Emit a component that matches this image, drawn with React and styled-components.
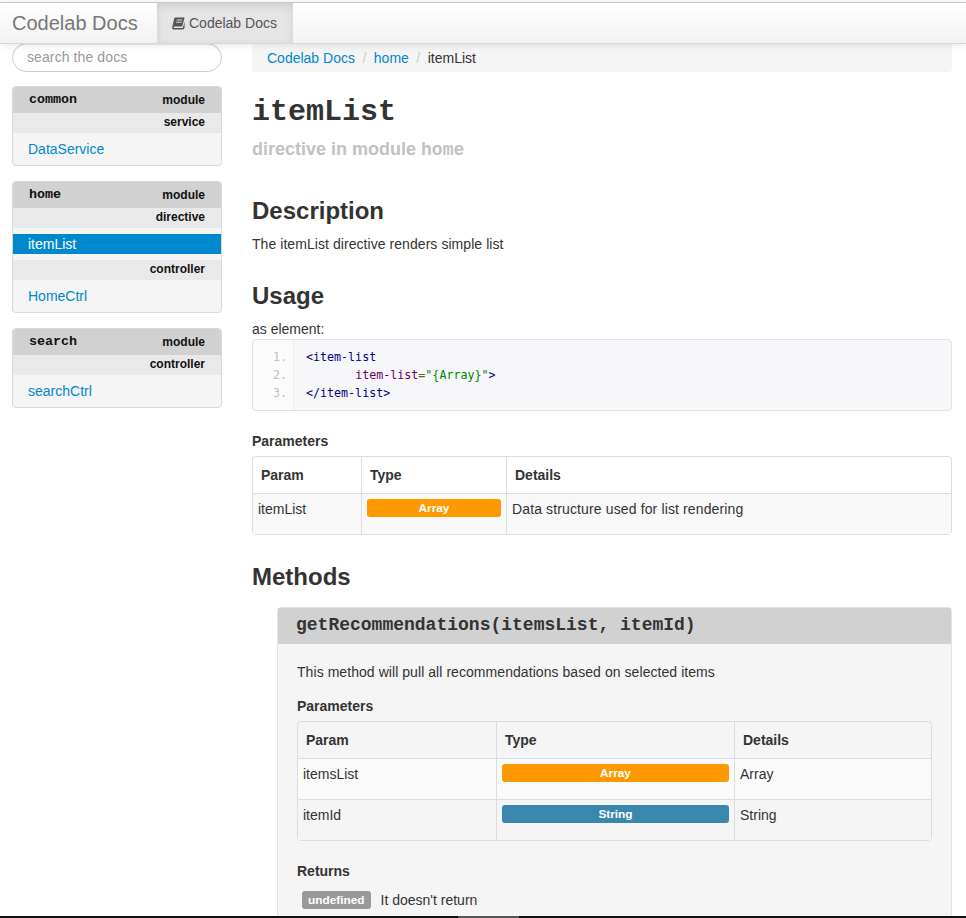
import React from 'react';
import styled, { createGlobalStyle } from 'styled-components';

const Global = createGlobalStyle`
  html, body { margin: 0; padding: 0; background: #fff; }
  body {
    font-family: "Liberation Sans", Arial, sans-serif;
    font-size: 14px;
    line-height: 20px;
    color: #333;
  }
  * { box-sizing: border-box; }
`;

const Page = styled.div`
  position: relative;
  width: 966px;
  height: 918px;
  overflow: hidden;
  padding-top: 2px;
`;

const BottomEdge = styled.div`
  position: absolute;
  left: 0;
  right: 0;
  bottom: 0;
  height: 2px;
  background: linear-gradient(to right, #111 458px, #555 458px, #555 519px, #111 519px);
`;

const Navbar = styled.div`
  display: flex;
  height: 42px;
  border-top: 1px solid #c9c9c9;
  border-bottom: 1px solid #d8d8d8;
  background: linear-gradient(to bottom, #fff, #f2f2f2);
  box-shadow: 0 1px 8px rgba(0, 0, 0, 0.1);
  position: relative;
  z-index: 2;
`;

const Brand = styled.div`
  font-size: 20px;
  line-height: 40px;
  color: #777;
  padding-left: 12px;
  width: 157px;
`;

const NavTab = styled.div`
  display: flex;
  align-items: center;
  gap: 4px;
  width: 136px;
  padding-left: 15px;
  font-size: 14px;
  color: #555;
  background: #e5e5e5;
  box-shadow: inset 0 3px 8px rgba(0, 0, 0, 0.1);
`;

const Columns = styled.div`
  display: flex;
  padding-left: 12px;
`;

const Sidebar = styled.div`
  width: 210px;
  flex: none;
  display: flex;
  flex-direction: column;
  gap: 15px;
`;

const Search = styled.input`
  width: 210px;
  height: 29px;
  margin-top: -1px;
  margin-bottom: -1px;
  padding: 0 14px 2px;
  border: 1px solid #ccc;
  border-radius: 15px;
  font: 14px "Liberation Sans", Arial, sans-serif;
  letter-spacing: 0.1px;
  outline: none;
  box-shadow: inset 0 1px 1px rgba(0, 0, 0, 0.075);
  &::placeholder { color: #999; opacity: 1; }
`;

const ModuleCard = styled.div`
  background: #f5f5f5;
  border: 1px solid #d9d9d9;
  border-radius: 4px;
  overflow: hidden;
`;

const ModuleHead = styled.div`
  display: flex;
  justify-content: space-between;
  align-items: center;
  height: 26px;
  padding: 0 16px 1px;
  background: #d1d1d1;
  color: #111;
  font-size: 12px;
  font-weight: bold;
`;

const ModuleName = styled.span`
  font-family: "Liberation Mono", "Courier New", monospace;
  font-size: 13.33px;
`;

const KindRow = styled.div`
  height: 20px;
  line-height: 19px;
  padding-right: 16px;
  text-align: right;
  background: #e9e9e9;
  color: #111;
  font-size: 12px;
  font-weight: bold;
`;

const NavItem = styled.div`
  height: ${(p) => (p.$active ? '20px' : '32px')};
  line-height: ${(p) => (p.$active ? '20px' : '32px')};
  padding-left: 15px;
  color: ${(p) => (p.$active ? '#fff' : '#0088cc')};
  background: ${(p) => (p.$active ? '#0088cc' : 'transparent')};
  margin: ${(p) => (p.$active ? '6px 0' : '0')};
`;

const Main = styled.div`
  width: 700px;
  flex: none;
  margin-left: 30px;
`;

const Breadcrumb = styled.div`
  height: 28px;
  line-height: 28px;
  padding-left: 15px;
  background: #f5f5f5;
  border-radius: 0 0 4px 4px;
  color: #333;
`;

const Crumb = styled.a`
  color: #0088cc;
`;

const CrumbSep = styled.span`
  color: #ccc;
  padding: 0 7.5px;
`;

const Title = styled.h1`
  margin: 25px 0 0;
  font-family: "Liberation Mono", "Courier New", monospace;
  font-size: 30px;
  line-height: 30px;
  font-weight: bold;
  color: #333;
`;

const Subtitle = styled.h2`
  margin: 10px 0 0;
  font-size: 18px;
  line-height: 24px;
  font-weight: bold;
  color: #c2c2c2;
  code {
    font-family: "Liberation Mono", "Courier New", monospace;
    font-size: 18px;
  }
`;

const Heading = styled.h2`
  margin: ${(p) => p.$top || '34px'} 0 0;
  font-size: 24px;
  line-height: 30px;
  font-weight: bold;
  color: #333;
`;

const Para = styled.p`
  margin: ${(p) => p.$top || '8px'} 0 0;
  letter-spacing: 0.06px;
`;

const AsElement = styled.p`
  margin: 8px 0 0;
`;

const CodeBlock = styled.div`
  display: flex;
  height: 72px;
  margin-top: 0;
  background: #f7f7f9;
  border: 1px solid #e1e1e8;
  border-radius: 4px;
  font-family: "DejaVu Sans Mono", monospace;
  font-size: 11.66px;
  line-height: 18px;
`;

const LineNumbers = styled.div`
  width: 41px;
  padding: 8px 6px 0 0;
  text-align: right;
  color: #bebec5;
  border-right: 1px solid #eeeef2;
  background: #fbfbfc;
  border-radius: 4px 0 0 4px;
`;

const CodeLines = styled.pre`
  margin: 0;
  padding: 8px 0 0 12px;
  font: inherit;
  .t { color: #000088; }
  .a { color: #660066; }
  .p { color: #666600; }
  .v { color: #008800; }
`;

const Label = styled.h4`
  margin: ${(p) => p.$top || '20px'} 0 0;
  font-size: 14px;
  line-height: 20px;
  font-weight: bold;
  color: #333;
`;

const Table = styled.table`
  width: 100%;
  margin-top: ${(p) => p.$top || '5px'};
  border-collapse: separate;
  border-spacing: 0;
  table-layout: fixed;
  border: 1px solid #ddd;
  border-radius: 4px;
`;

const Th = styled.th`
  height: 36px;
  padding: 0 8px;
  text-align: left;
  font-weight: bold;
  border-left: ${(p) => (p.$first ? 'none' : '1px solid #ddd')};
`;

const Td = styled.td`
  height: ${(p) => p.$h || '41px'};
  padding: 5px;
  vertical-align: top;
  letter-spacing: ${(p) => p.$track || '0'};
  border-top: 1px solid #ddd;
  border-left: ${(p) => (p.$first ? 'none' : '1px solid #ddd')};
  background: ${(p) => p.$bg || '#f9f9f9'};
`;

const Badge = styled.span`
  display: block;
  height: 18px;
  line-height: 18px;
  border-radius: 3px;
  text-align: center;
  color: #fff;
  font-size: 11.844px;
  font-weight: bold;
  letter-spacing: 0;
  background: ${(p) => p.$color};
`;

const MethodCard = styled.div`
  margin: 15px 0 0 25px;
  height: 400px;
  background: #f5f5f5;
  border: 1px solid #e3e3e3;
  border-radius: 4px 4px 0 0;
`;

const MethodHead = styled.div`
  height: 36px;
  line-height: 34px;
  padding-left: 18px;
  background: #d1d1d1;
  font-family: "Liberation Mono", "Courier New", monospace;
  font-size: 18px;
  font-weight: bold;
  color: #333;
`;

const MethodBody = styled.div`
  padding: 18px 19px 0;
`;

const ReturnRow = styled.div`
  display: flex;
  align-items: center;
  gap: 10px;
  margin: 9px 0 0 5px;
`;

const SmallBadge = styled.span`
  height: 18px;
  line-height: 18px;
  padding: 0 6px;
  background: #999;
  border-radius: 3px;
  color: #fff;
  font-size: 11.844px;
  font-weight: bold;
`;

const BookIcon = () => (
  <svg width="13" height="13" viewBox="0 0 13 13">
    <path
      fill="#555"
      d="M3.4 0.5H12.6L10.2 9.6H2.4C1.5 9.6 1.4 11 2.4 11H10.9L12.6 4.6V10.8L11.3 12.5H1.7C0.5 12.5 0 11.4 0.2 10.3L2.2 1.5C2.4 0.9 2.8 0.5 3.4 0.5Z"
    />
    <path stroke="#ddd" strokeWidth="1" fill="none" d="M4.6 3H10.4M4 5.2H9.8" />
  </svg>
);

const modules = [
  { name: 'common', groups: [{ kind: 'service', items: ['DataService'] }] },
  {
    name: 'home',
    groups: [
      { kind: 'directive', items: ['itemList'], active: true },
      { kind: 'controller', items: ['HomeCtrl'] },
    ],
  },
  { name: 'search', groups: [{ kind: 'controller', items: ['searchCtrl'] }] },
];

export default function App() {
  return (
    <Page>
      <Global />
      <Navbar>
        <Brand>Codelab Docs</Brand>
        <NavTab>
          <BookIcon />
          Codelab Docs
        </NavTab>
      </Navbar>
      <Columns>
        <Sidebar>
          <Search placeholder="search the docs" />
          {modules.map((m) => (
            <ModuleCard key={m.name}>
              <ModuleHead>
                <ModuleName>{m.name}</ModuleName>
                <span>module</span>
              </ModuleHead>
              {m.groups.map((g) => (
                <React.Fragment key={g.kind}>
                  <KindRow>{g.kind}</KindRow>
                  {g.items.map((i) => (
                    <NavItem key={i} $active={g.active}>{i}</NavItem>
                  ))}
                </React.Fragment>
              ))}
            </ModuleCard>
          ))}
        </Sidebar>
        <Main>
          <Breadcrumb>
            <Crumb>Codelab Docs</Crumb>
            <CrumbSep>/</CrumbSep>
            <Crumb>home</Crumb>
            <CrumbSep>/</CrumbSep>
            itemList
          </Breadcrumb>
          <Title>itemList</Title>
          <Subtitle>directive in module <code>home</code></Subtitle>
          <Heading>Description</Heading>
          <Para>The itemList directive renders simple list</Para>
          <Heading $top="27px">Usage</Heading>
          <AsElement>as element:</AsElement>
          <CodeBlock>
            <LineNumbers>1.<br />2.<br />3.</LineNumbers>
            <CodeLines>
              <span className="t">&lt;item-list</span>{'\n'}
              {'       '}<span className="a">item-list</span><span className="p">=</span><span className="v">"{'{Array}'}"</span><span className="t">&gt;</span>{'\n'}
              <span className="t">&lt;/item-list&gt;</span>
            </CodeLines>
          </CodeBlock>
          <Label>Parameters</Label>
          <Table>
            <colgroup>
              <col style={{ width: 108 }} />
              <col style={{ width: 145 }} />
              <col />
            </colgroup>
            <thead>
              <tr><Th $first>Param</Th><Th>Type</Th><Th>Details</Th></tr>
            </thead>
            <tbody>
              <tr>
                <Td $first>itemList</Td>
                <Td><Badge $color="#ff9900">Array</Badge></Td>
                <Td $track="0.13px">Data structure used for list rendering</Td>
              </tr>
            </tbody>
          </Table>
          <Heading $top="27px">Methods</Heading>
          <MethodCard>
            <MethodHead>getRecommendations(itemsList, itemId)</MethodHead>
            <MethodBody>
              <Para $top="0">This method will pull all recommendations based on selected items</Para>
              <Label $top="14px">Parameters</Label>
              <Table>
                <colgroup>
                  <col style={{ width: 198 }} />
                  <col style={{ width: 238 }} />
                  <col />
                </colgroup>
                <thead>
                  <tr><Th $first>Param</Th><Th>Type</Th><Th>Details</Th></tr>
                </thead>
                <tbody>
                  <tr>
                    <Td $first $bg="#fafafa">itemsList</Td>
                    <Td $bg="#fafafa"><Badge $color="#ff9900">Array</Badge></Td>
                    <Td $bg="#fafafa">Array</Td>
                  </tr>
                  <tr>
                    <Td $first $bg="#f5f5f5">itemId</Td>
                    <Td $bg="#f5f5f5"><Badge $color="#3a87ad">String</Badge></Td>
                    <Td $bg="#f5f5f5">String</Td>
                  </tr>
                </tbody>
              </Table>
              <Label $top="20px">Returns</Label>
              <ReturnRow>
                <SmallBadge>undefined</SmallBadge>
                It doesn't return
              </ReturnRow>
            </MethodBody>
          </MethodCard>
        </Main>
      </Columns>
      <BottomEdge />
    </Page>
  );
}
